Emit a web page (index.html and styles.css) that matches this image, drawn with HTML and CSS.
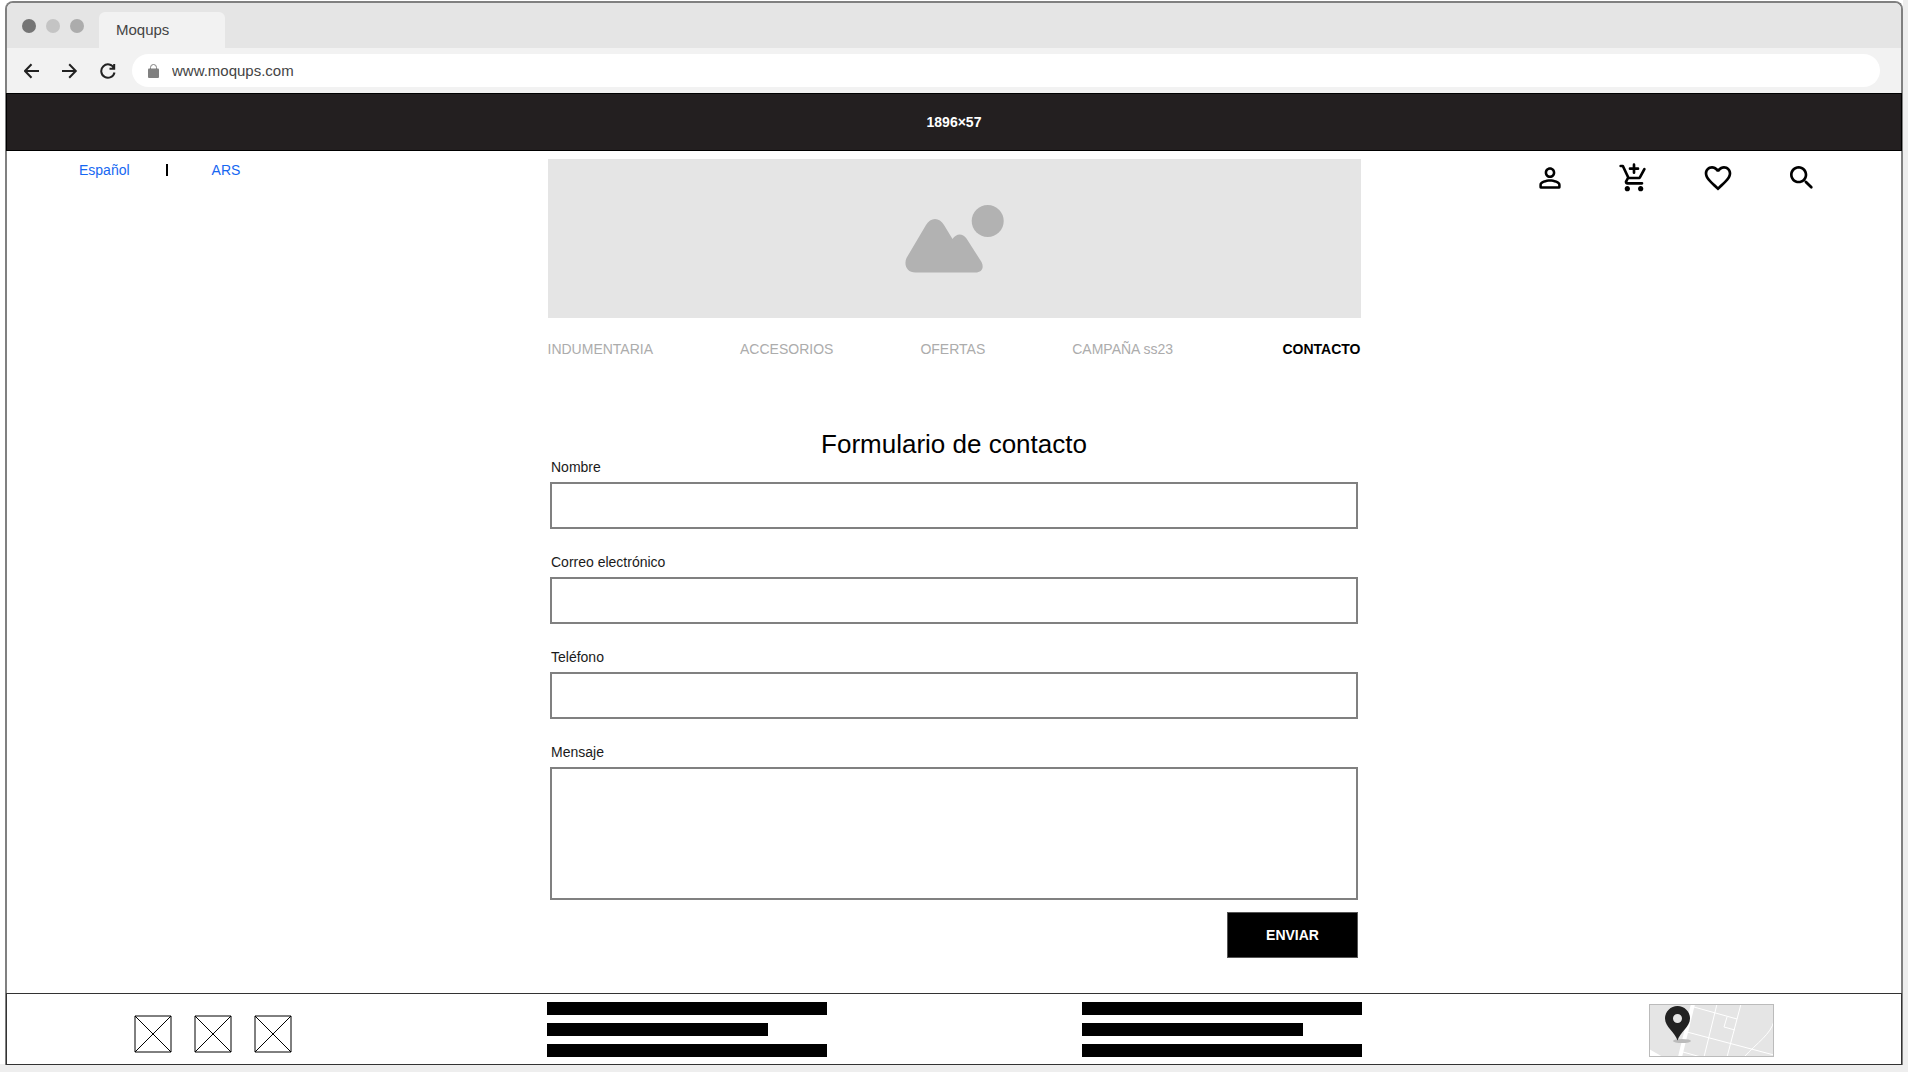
FILE: index.html
```html
<!DOCTYPE html>
<html lang="es">
<head>
<meta charset="utf-8">
<title>Moqups</title>
<link rel="stylesheet" href="styles.css">
</head>
<body>
<div class="window">
  <div class="tabs">
    <span class="dot dot-dark"></span>
    <span class="dot dot-light"></span>
    <span class="dot"></span>
    <div class="tab">Moqups</div>
  </div>
  <div class="toolbar">
    <button class="tool" type="button" aria-label="Atrás"><svg width="16" height="16" viewBox="0 0 16 16"><path d="M15 8H1.500M7.500 1.200 1 8 7.500 14.800"/></svg></button>
    <button class="tool" type="button" aria-label="Adelante"><svg width="16" height="16" viewBox="0 0 16 16"><path d="M0 8h13.500M7.200 1.200 13.800 8 7.200 14.800"/></svg></button>
    <button class="tool" type="button" aria-label="Recargar"><svg width="16" height="16" viewBox="0 0 16 16"><path d="M14.500 9.500A6.700 6.700 0 1 1 14 5.200M14.200 1v4.700H9.500"/></svg></button>
    <div class="address">
      <svg width="11" height="14" viewBox="0 0 11 14"><rect y="4.500" width="11" height="9.500" rx="1" fill="#808080"/><path d="M2.500 5.500V3.500a3 3 0 0 1 6 0v2" fill="none" stroke="#808080"/></svg>
      <input class="url" type="text" value="www.moqups.com" aria-label="Dirección">
    </div>
  </div>
  <div class="banner">1896×57</div>
  <header class="header">
    <div class="locale">
      <a href="#">Español</a>
      <span class="bar"></span>
      <a href="#">ARS</a>
    </div>
    <div class="hero">
      <svg width="100" height="68" viewBox="0 0 100 68" fill="#b2b2b2"><circle cx="83.700" cy="16" r="16"/><path d="M2.500 53 22 20C26.500 12 35.500 12 40 20L48.500 34C52.500 28 58.500 28 62.500 33.500L77.500 57C80.500 63 77.500 67.500 71.500 67.500H11.500C3 67.500-.500 60 2.500 53Z"/></svg>
    </div>
    <div class="actions">
      <a href="#" aria-label="Cuenta"><svg width="32" height="32" viewBox="0 0 24 24"><path d="M12 5.900c1.160 0 2.100.94 2.100 2.100s-.94 2.100-2.100 2.100S9.900 9.160 9.900 8s.94-2.100 2.100-2.100m0 9c2.970 0 6.100 1.460 6.100 2.100v1.100H5.900V17c0-.64 3.130-2.100 6.100-2.100M12 4C9.790 4 8 5.790 8 8s1.790 4 4 4 4-1.790 4-4-1.790-4-4-4zm0 9c-2.670 0-8 1.340-8 4v2q0 1 1 1h14q1 0 1-1v-2c0-2.660-5.330-4-8-4z"/></svg></a>
      <a href="#" aria-label="Carrito"><svg width="32" height="32" viewBox="0 0 24 24"><path d="M11 8q0 1 1 1t1-1V6h2q1 0 1-1t-1-1h-2V2q0-1-1-1t-1 1v2H9q-1 0-1 1t1 1h2zm-4 10c-1.100 0-1.990.9-1.990 2S5.900 22 7 22s2-.9 2-2-.9-2-2-2zm10 0c-1.100 0-1.990.9-1.990 2s.89 2 1.990 2 2-.9 2-2-.9-2-2-2zm-9.830-3.250.03-.12.900-1.630h7.450c.75 0 1.410-.41 1.750-1.030l3.380-6.130q.4-.9-.4-1.380-.9-.4-1.380.4L15.550 11H8.530L4.550 2.570Q4.270 2 3.640 2H2Q1 2 1 3t1 1h1l3.600 7.590-1.350 2.450c-.16.280-.25.610-.25.960 0 1.100.9 2 2 2h11q1 0 1-1t-1-1H7.420c-.13 0-.25-.11-.25-.25z"/></svg></a>
      <a href="#" aria-label="Favoritos"><svg width="32" height="32" viewBox="0 0 24 24"><path d="M16.500 3c-1.740 0-3.410.81-4.500 2.090C10.910 3.810 9.240 3 7.500 3 4.420 3 2 5.420 2 8.500c0 3.780 3.400 6.860 8.550 11.540L12 21.350l1.450-1.320C18.600 15.360 22 12.280 22 8.500 22 5.420 19.580 3 16.500 3zm-4.400 15.550-.1.100-.1-.1C7.140 14.240 4 11.390 4 8.500 4 6.500 5.500 5 7.500 5c1.540 0 3.040.99 3.570 2.360h1.870C13.460 5.990 14.960 5 16.500 5c2 0 3.500 1.500 3.500 3.500 0 2.890-3.140 5.740-7.900 10.050z"/></svg></a>
      <a href="#" aria-label="Buscar"><svg width="32" height="32" viewBox="0 0 24 24"><path d="M15.500 14h-.79l-.28-.27C15.410 12.590 16 11.110 16 9.500 16 5.910 13.090 3 9.500 3S3 5.910 3 9.500 5.910 16 9.500 16c1.610 0 3.090-.59 4.230-1.570l.27.280v.79l4.250 4.250q.75.600 1.490 0 .6-.75 0-1.490L15.500 14zm-6 0C7.010 14 5 11.990 5 9.500S7.010 5 9.500 5 14 7.010 14 9.500 11.990 14 9.500 14z"/></svg></a>
    </div>
  </header>
  <nav class="nav">
    <a href="#">INDUMENTARIA</a>
    <a href="#">ACCESORIOS</a>
    <a href="#">OFERTAS</a>
    <a href="#">CAMPAÑA ss23</a>
    <a href="#" class="current">CONTACTO</a>
  </nav>
  <form class="form">
    <h1>Formulario de contacto</h1>
    <div class="field"><label for="nombre">Nombre</label><input id="nombre" type="text"></div>
    <div class="field"><label for="correo">Correo electrónico</label><input id="correo" type="email"></div>
    <div class="field"><label for="telefono">Teléfono</label><input id="telefono" type="tel"></div>
    <div class="field"><label for="mensaje">Mensaje</label><textarea id="mensaje"></textarea></div>
    <button class="send" type="button">ENVIAR</button>
  </form>
  <footer class="footer">
    <div class="social">
      <svg width="38" height="38" viewBox="0 0 38 38"><path d="M1 1h36v36H1zL37 37M37 1 1 37"/></svg>
      <svg width="38" height="38" viewBox="0 0 38 38"><path d="M1 1h36v36H1zL37 37M37 1 1 37"/></svg>
      <svg width="38" height="38" viewBox="0 0 38 38"><path d="M1 1h36v36H1zL37 37M37 1 1 37"/></svg>
    </div>
    <div class="columns">
      <div class="lines"><span></span><span class="short"></span><span></span></div>
      <div class="lines"><span></span><span class="short"></span><span></span></div>
    </div>
    <div class="place">
      <svg class="map" width="125" height="53" viewBox="0 0 125 53">
        <rect width="125" height="53" fill="#e5e5e5"/>
        <g fill="none" stroke="#fff">
          <path stroke-width="4" d="M44 0 31 53"/>
          <path d="M45 3 88 15M68 0 55 53M92 0 78 53M38 28 125 51M34 48 52 53M78 13 75 23 86 26M125 17C122 30 108 39 95 53"/>
        </g>
        <path d="M0 45 14 53H0Z" fill="#fff"/>
        <rect x=".5" y=".5" width="124" height="52" fill="none" stroke="#bbb"/>
        <ellipse cx="33" cy="37" rx="9" ry="2" fill="#bbb"/>
        <path fill="#222" fill-rule="evenodd" d="M28.500 36.500C26 28 16 23 16 14.500a12.500 12.500 0 0 1 25 0C41 23 31 28 28.500 36.500ZM28.500 10a4.500 4.500 0 1 0 0 9 4.500 4.500 0 0 0 0-9Z"/>
      </svg>
    </div>
  </footer>
</div>
</body>
</html>
```
FILE: styles.css
```css
* { box-sizing: border-box; }

body {
  margin: 0;
  padding: 1px 5px 7px;
  min-height: 100vh;
  background: linear-gradient(#fff, #fff) left top / calc(100% - 5px) calc(100% - 8px) no-repeat #eee;
  font: 14px/16px "Liberation Sans", Arial, sans-serif;
  color: #000;
}

a { color: inherit; text-decoration: none; }
svg { display: block; }

.window {
  display: flex;
  flex-direction: column;
  min-height: calc(100vh - 8px);
  border: 2px solid #808080;
  border-bottom: 0;
  border-radius: 8px 8px 0 0;
  background: #fff;
}

.tabs {
  display: flex;
  align-items: center;
  gap: 10px;
  height: 45px;
  padding-left: 15px;
  border-radius: 6px 6px 0 0;
  background: #e5e5e5;
}
.dot { width: 14px; height: 14px; border-radius: 50%; background: #acacac; }
.dot-dark { background: #757575; }
.dot-light { background: #c4c4c4; }
.tab {
  align-self: flex-end;
  width: 126px;
  height: 36px;
  margin-left: 5px;
  padding-left: 17px;
  border-radius: 6px 6px 0 0;
  background: #f2f2f2;
  color: #444;
  font-size: 15px;
  line-height: 36px;
}

.toolbar {
  display: flex;
  align-items: center;
  gap: 22px;
  height: 45px;
  padding: 0 21px 0 17px;
  background: #f2f2f2;
}
.tool { padding: 0; border: 0; background: none; }
.tool svg { fill: none; stroke: #222; stroke-width: 2; }
.address {
  display: flex;
  flex: 1;
  align-items: center;
  gap: 13px;
  height: 33px;
  margin-left: -6px;
  padding: 0 16px;
  border-radius: 17px;
  background: #fff;
}
.url {
  flex: 1;
  padding: 0;
  border: 0;
  background: none;
  color: #444;
  font: 15px/18px "Liberation Sans", Arial, sans-serif;
}

.banner {
  margin: 0 -1px;
  height: 58px;
  border: 1px solid #000;
  background: #231f20;
  color: #fff;
  font-weight: bold;
  line-height: 56px;
  text-align: center;
}

.header {
  display: grid;
  grid-template-columns: 1fr 813px 1fr;
  padding-top: 8px;
}
.locale {
  display: flex;
  align-items: center;
  align-self: start;
  gap: 36px;
  padding: 3px 0 0 72px;
  color: #1667f2;
}
.bar { width: 2px; height: 12px; margin-right: 8px; background: #000; }
.hero {
  display: grid;
  place-items: center;
  height: 159px;
  background: #e5e5e5;
}
.actions {
  display: flex;
  justify-content: flex-end;
  gap: 52px;
  padding: 3px 83px 0 0;
}

.nav {
  display: flex;
  gap: 87px;
  width: 813px;
  margin: 23px auto 0;
  color: #acacac;
}
.current { margin-left: auto; color: #000; font-weight: bold; }

.form {
  display: flex;
  flex-direction: column;
  width: 808px;
  margin: 72px auto 32px;
}
h1 {
  margin: 0;
  font-size: 26px;
  font-weight: normal;
  line-height: 30px;
  text-align: center;
}
.field { display: flex; flex-direction: column; gap: 7px; margin-bottom: 25px; }
.field label { padding-left: 1px; color: #1a1a1a; }
.field input, .field textarea {
  height: 47px;
  padding: 8px;
  border: 2px solid #808080;
  border-radius: 0;
  background: #fff;
  font: inherit;
}
.field textarea { height: 133px; resize: none; }
.send {
  align-self: flex-end;
  width: 131px;
  height: 46px;
  margin-top: -13px;
  border: 1px solid #555;
  background: #000;
  color: #fff;
  font: bold 14px/16px "Liberation Sans", Arial, sans-serif;
}

.footer {
  display: grid;
  grid-template-columns: 1fr 815px 1fr;
  align-items: center;
  height: 72px;
  margin: auto -1px 0;
  border: 1px solid #333;
}
.social { display: flex; gap: 22px; padding: 10px 0 0 127px; }
.social path { fill: none; stroke: #000; }
.columns { display: flex; justify-content: space-between; }
.lines { display: grid; gap: 8px; width: 280px; }
.lines span { height: 13px; background: #000; }
.lines .short { width: 221px; }
.place { display: flex; justify-content: flex-end; padding: 2px 127px 0 0; }
```
